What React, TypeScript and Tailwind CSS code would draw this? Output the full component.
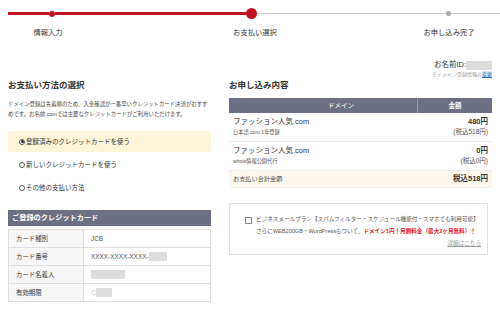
const FONT = "font-['Liberation_Sans','Noto_Sans_CJK_JP',sans-serif]";

function Radio({ checked }: { checked?: boolean }) {
  return (
    <span className="mr-[1px] inline-flex h-[6px] w-[6px] items-center justify-center rounded-full border border-[#555] bg-white">
      {checked && <span className="h-[3px] w-[3px] rounded-full bg-[#333]" />}
    </span>
  );
}

function Masked({ w }: { w: number }) {
  return <span className="inline-block h-[9px] bg-[#dcdcdc] align-middle" style={{ width: w }} />;
}

const cardRows: { label: string; value: React.ReactNode }[] = [
  { label: "カード種別", value: "JCB" },
  {
    label: "カード番号",
    value: (
      <span className="flex items-center">
        XXXX-XXXX-XXXX-<Masked w={18} />
      </span>
    ),
  },
  {
    label: "カード名義人",
    value: (
      <span className="flex items-center">
        <Masked w={34} />
      </span>
    ),
  },
  {
    label: "有効期限",
    value: (
      <span className="flex items-center">
        <span className="text-[#bbb]">C</span>
        <Masked w={16} />
      </span>
    ),
  },
];

const orderRows = [
  { name: "ファッション人気.com", sub: "日本語.com 1年登録", price: "480円", tax: "(税込518円)" },
  { name: "ファッション人気.com", sub: "whois情報公開代行", price: "0円", tax: "(税込0円)" },
];

export default function App() {
  return (
    <div className={`${FONT} h-[310px] w-[500px] overflow-hidden bg-white text-[#333]`}>
      {/* progress */}
      <div className="flex h-[27px] items-center pl-[8px]">
        <div className="h-[3px] w-[41px] bg-[#c0121f]" />
        <div className="h-[6px] w-[6px] rounded-full bg-[#c0121f]" />
        <div className="h-[3px] w-[191px] bg-[#c0121f]" />
        <div className="h-[11px] w-[11px] rounded-full bg-[#c0121f]" />
        <div className="h-[1px] w-[189px] bg-[#cfcfcf]" />
        <div className="h-[5px] w-[5px] rounded-full bg-[#aaa]" />
        <div className="h-[1px] flex-1 bg-[#cfcfcf]" />
      </div>
      <div className="flex h-[12px] text-[7.3px] leading-[12px]">
        <div className="ml-[8px] w-[80px] text-center">情報入力</div>
        <div className="ml-[117px] w-[100px] text-center">お支払い選択</div>
        <div className="ml-[94px] w-[100px] text-center">お申し込み完了</div>
      </div>

      <div className="flex gap-[18px] pl-[8px]">
        {/* left column */}
        <div className="w-[203px] pt-[40px]">
          <h2 className="text-[8.5px] font-bold leading-[12px]">お支払い方法の選択</h2>
          <p className="mt-[8px] text-[5.4px] leading-[10px] text-[#444]">
            ドメイン登録は先着順のため、入金確認が一番早いクレジットカード決済がおすす
            <br />
            めです。お名前.comでは主要なクレジットカードがご利用いただけます。
          </p>
          <div className="mt-[12px] flex h-[21px] items-center rounded-[2px] bg-[#fdf5d9] pl-[11px] text-[6.5px]">
            <Radio checked />
            登録済みのクレジットカードを使う
          </div>
          <div className="mt-[7px] flex h-[12px] items-center pl-[11px] text-[6.5px]">
            <Radio />
            新しいクレジットカードを使う
          </div>
          <div className="mt-[11px] flex h-[12px] items-center pl-[11px] text-[6.5px]">
            <Radio />
            その他の支払い方法
          </div>
          <div className="mt-[16px] flex h-[16px] items-center bg-[#6d7084] pl-[4px] text-[7.2px] font-bold text-white">
            ご登録のクレジットカード
          </div>
          <div className="mt-[3px] border-t border-l border-[#dedede] text-[6.4px]">
            {cardRows.map((r) => (
              <div key={r.label} className="flex h-[18px] border-b border-[#dedede]">
                <div className="flex w-[75px] items-center border-r border-[#dedede] bg-[#f7f7f7] pl-[7px]">
                  {r.label}
                </div>
                <div className="flex flex-1 items-center border-r border-[#dedede] pl-[7px] text-[#555]">
                  {r.value}
                </div>
              </div>
            ))}
          </div>
        </div>

        {/* right column */}
        <div className="w-[263px] pt-[21px]">
          <div className="flex h-[10px] items-center justify-end text-[7.5px]">
            お名前ID:
            <Masked w={26} />
          </div>
          <div className="flex h-[9px] items-center justify-end text-[5px] text-[#999]">
            ※ドメイン登録情報の
            <span className="bg-[#dceaf7] text-[#2a6ebb] underline">変更</span>
          </div>
          <h2 className="text-[8.5px] font-bold leading-[12px]">お申し込み内容</h2>
          <div className="mt-[7px] flex h-[15px] bg-[#6d7084] text-[6.5px] text-white">
            <div className="flex w-[189px] items-center justify-center border-r border-[#9a9cab] pl-[36px]">
              ドメイン
            </div>
            <div className="flex flex-1 items-center justify-center font-bold">金額</div>
          </div>
          {orderRows.map((r, i) => (
            <div key={i} className="flex h-[29px] border-b border-[#eee] pt-[3px] pr-[4px] pl-[4px]">
              <div className="flex-1">
                <div className="text-[7.5px] leading-[11px]">{r.name}</div>
                <div className="text-[5.2px] leading-[10px] text-[#555]">{r.sub}</div>
              </div>
              <div className="text-right">
                <div className="text-[7.5px] font-bold leading-[11px]">{r.price}</div>
                <div className="text-[6.5px] leading-[10px] text-[#555]">{r.tax}</div>
              </div>
            </div>
          ))}
          <div className="flex h-[17px] items-center justify-between border-b border-[#eee] bg-[#fcf7ec] px-[4px]">
            <span className="text-[6.2px] text-[#555]">お支払い合計金額</span>
            <span className="text-[7.5px] font-bold">税込518円</span>
          </div>

          <div className="mt-[15px] h-[52px] w-[259px] border border-[#e2e2e2] pt-[9px] pr-[6px] pl-[15px]">
            <div className="flex">
              <span className="mt-[4px] mr-[4px] h-[7px] w-[7px] shrink-0 border border-[#888] bg-white" />
              <div className="flex-1 text-[5.6px] leading-[12px] text-[#555]">
                <div className="whitespace-nowrap">
                  ビジネスメールプラン【スパムフィルター・スケジュール機能付・スマホでも利用可能】
                </div>
                <div className="whitespace-nowrap">
                  さらにWEB200GB・WordPressもついて、
                  <span className="font-bold text-[#e4141e]">ドメイン1円！月額料金（最大2ヶ月無料）！</span>
                </div>
                <div className="text-right text-[#999] underline">詳細はこちら</div>
              </div>
            </div>
          </div>
        </div>
      </div>
    </div>
  );
}
